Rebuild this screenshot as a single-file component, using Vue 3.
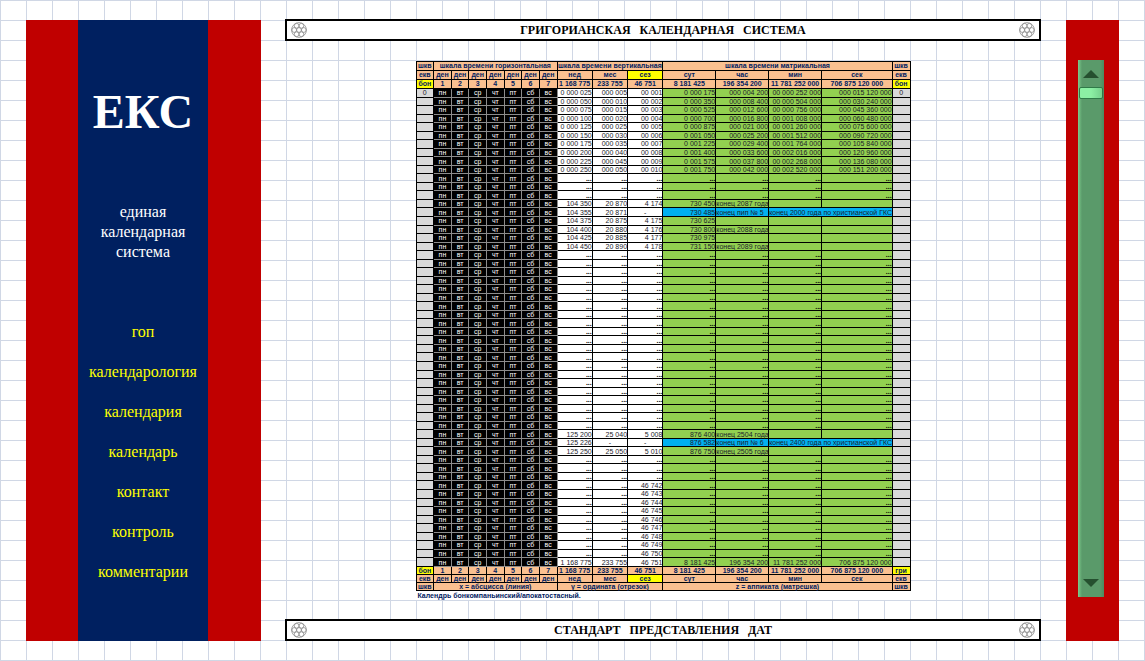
<script setup>
import { ref } from 'vue'

const position = ref(1)

const spaced = (...words) => words.join('\u00a0\u00a0\u00a0')
const title = spaced('ГРИГОРИАНСКАЯ', 'КАЛЕНДАРНАЯ', 'СИСТЕМА')
const standard = spaced('СТАНДАРТ', 'ПРЕДСТАВЛЕНИЯ', 'ДАТ')

const links = ['гоп', 'календарология', 'календария', 'календарь', 'контакт', 'контроль', 'комментарии']
const week = ['пн', 'вт', 'ср', 'чт', 'пт', 'сб', 'вс']
const days = [1, 2, 3, 4, 5, 6, 7]
const totals = ['1 168 775', '233 755', '46 751', '8 181 425', '196 354 200', '11 781 252 000', '706 875 120 000']
const units = ['нед', 'мес', 'сез', 'сут', 'час', 'мин', 'сек']

function pad(value, length) {
  const digits = String(value).padStart(length, '0')
  return digits.replace(/\B(?=(\d{3})+$)/g, ' ')
}

const dots = '...'
const empty = () => Array(7).fill(dots)

const rows = []
for (let i = 1; i <= 10; i++) {
  rows.push([pad(25 * i, 7), pad(5 * i, 6), pad(i, 5), pad(175 * i, 7), pad(4200 * i, 9), pad(252000 * i, 11), pad(15120000 * i, 12)])
}
for (let i = 0; i < 3; i++) rows.push(empty())
rows.push(['104 350', '20 870', '4 174', '730 450', 'конец 2087 года', '', ''])
rows.push(['104 355', '20 871', '-', '730 485', 'конец пип № 5', 'конец 2000 года по христианской ГКС'])
rows.push(['104 375', '20 875', '4 175', '730 625', '', '', ''])
rows.push(['104 400', '20 880', '4 176', '730 800', 'конец 2088 года', '', ''])
rows.push(['104 425', '20 885', '4 177', '730 975', '', '', ''])
rows.push(['104 450', '20 890', '4 178', '731 150', 'конец 2089 года', '', ''])
for (let i = 0; i < 21; i++) rows.push(empty())
rows.push(['125 200', '25 040', '5 008', '876 400', 'конец 2504 года', '', ''])
rows.push(['125 226', '-', '-', '876 582', 'конец пип № 6', 'конец 2400 года по христианской ГКС'])
rows.push(['125 250', '25 050', '5 010', '876 750', 'конец 2505 года', '', ''])
for (let i = 0; i < 3; i++) rows.push(empty())
for (let n = 46742; n <= 46750; n++) rows.push([dots, dots, pad(n, 5), dots, dots, dots, dots])
rows.push(totals)

function cellClass(row, index, text) {
  return {
    plain: index < 3,
    green: index > 2 && row.length === 7,
    blue: index > 2 && row.length === 6,
    note: text.startsWith('конец'),
    dash: text === '-',
    dots: text === dots,
  }
}
</script>

<template>
  <div class="page">
    <aside class="side">
      <div class="side-inner">
        <h1>ЕКС</h1>
        <p>единая<br />календарная<br />система</p>
        <nav>
          <a v-for="link in links" :key="link" href="#">{{ link }}</a>
        </nav>
      </div>
    </aside>

    <main>
      <header class="bar">
        <svg class="rosette" viewBox="0 0 16 16" aria-hidden="true">
          <use href="#rosette" />
        </svg>
        <h2>{{ title }}</h2>
        <svg class="rosette" viewBox="0 0 16 16" aria-hidden="true">
          <use href="#rosette" />
        </svg>
      </header>

      <figure>
        <table>
          <colgroup>
            <col v-for="n in 8" :key="'a' + n" class="w1" />
            <col v-for="n in 3" :key="'b' + n" class="w2" />
            <col v-for="n in 3" :key="'c' + n" class="w3" />
            <col class="w4" />
            <col class="w1" />
          </colgroup>
          <thead>
            <tr>
              <th>шкв</th>
              <th colspan="7">шкала времени горизонтальная</th>
              <th colspan="3">шкала времени вертикальная</th>
              <th colspan="4">шкала времени матрикальная</th>
              <th>шкв</th>
            </tr>
            <tr>
              <th>екв</th>
              <th v-for="d in days" :key="d">ден</th>
              <th v-for="u in units" :key="u" :class="{ yellow: u === 'сез' }">{{ u }}</th>
              <th>екв</th>
            </tr>
            <tr>
              <th class="yellow">бон</th>
              <th v-for="d in days" :key="d">{{ d }}</th>
              <th v-for="t in totals" :key="t">{{ t }}</th>
              <th class="yellow">бон</th>
            </tr>
          </thead>
          <tbody>
            <tr v-for="(row, r) in rows" :key="r">
              <td class="edge">{{ r === 0 ? 0 : '' }}</td>
              <td v-for="day in week" :key="day" class="day">{{ day }}</td>
              <td
                v-for="(text, i) in row"
                :key="i"
                :class="cellClass(row, i, text)"
                :colspan="row.length === 6 && i === 5 ? 2 : 1"
              >{{ text }}</td>
              <td class="edge">{{ r === 0 ? 0 : '' }}</td>
            </tr>
          </tbody>
          <tfoot>
            <tr>
              <th class="yellow">бон</th>
              <th v-for="d in days" :key="d">{{ d }}</th>
              <th v-for="t in totals" :key="t">{{ t }}</th>
              <th class="yellow">гри</th>
            </tr>
            <tr>
              <th>екв</th>
              <th v-for="d in days" :key="d">ден</th>
              <th v-for="u in units" :key="u" :class="{ yellow: u === 'сез' }">{{ u }}</th>
              <th>екв</th>
            </tr>
            <tr>
              <th>шкв</th>
              <th colspan="7">x = абсцисса (линия)</th>
              <th colspan="3">y = ордината (отрезок)</th>
              <th colspan="4">z = аппиката (матрешка)</th>
              <th>шкв</th>
            </tr>
          </tfoot>
        </table>
        <figcaption>Календрь бонкомпаньинский/апокатостасный.</figcaption>
      </figure>

      <footer class="bar">
        <svg class="rosette" viewBox="0 0 16 16" aria-hidden="true">
          <use href="#rosette" />
        </svg>
        <h2>{{ standard }}</h2>
        <svg class="rosette" viewBox="0 0 16 16" aria-hidden="true">
          <use href="#rosette" />
        </svg>
      </footer>
    </main>

    <aside class="rail">
      <div class="scroller">
        <button type="button" aria-label="Вверх" @click="position--">
          <svg viewBox="0 0 16 8"><path d="M8 0 16 8H0Z" /></svg>
        </button>
        <input v-model.number="position" type="range" min="1" max="100" aria-label="Прокрутка" />
        <button type="button" aria-label="Вниз" @click="position++">
          <svg viewBox="0 0 16 8"><path d="M0 0H16L8 8Z" /></svg>
        </button>
      </div>
    </aside>

    <svg class="defs" aria-hidden="true">
      <symbol id="rosette" viewBox="0 0 16 16">
        <g fill="none" stroke="#8c8c8c" stroke-width="0.8">
          <circle cx="8" cy="8" r="7.4" />
          <circle cx="8" cy="8" r="2.4" />
          <circle cx="12.8" cy="8" r="2.4" />
          <circle cx="10.4" cy="12.2" r="2.4" />
          <circle cx="5.6" cy="12.2" r="2.4" />
          <circle cx="3.2" cy="8" r="2.4" />
          <circle cx="5.6" cy="3.8" r="2.4" />
          <circle cx="10.4" cy="3.8" r="2.4" />
        </g>
      </symbol>
    </svg>
  </div>
</template>

<style>
body {
  margin: 0;
}
</style>

<style scoped>
.page {
  box-sizing: border-box;
  min-height: 100vh;
  padding: 19px 26px 20px;
  display: grid;
  grid-template-columns: 235px 1fr 53px;
  gap: 24px;
  background-color: #fff;
  background-image: linear-gradient(to right, #d0d7e5 1px, transparent 1px),
    linear-gradient(to bottom, #d0d7e5 1px, transparent 1px);
  background-size: 26px 20px;
  font-family: "Liberation Serif", "Times New Roman", serif;
}

.side,
.rail {
  margin-top: 1px;
  background: #c00000;
}

.side-inner {
  box-sizing: border-box;
  height: 100%;
  margin: 0 53px 0 52px;
  padding-top: 60px;
  background: #002060;
  color: #fff;
  text-align: center;
  font-size: 16px;
  line-height: 20px;
}

h1 {
  margin: 0 0 58px;
  font-size: 48px;
  line-height: 64px;
}

.side p {
  margin: 0 0 60px;
}

nav {
  display: flex;
  flex-direction: column;
  align-items: center;
  gap: 20px;
}

nav a {
  color: #ff0;
  text-decoration: none;
}

main {
  margin-right: 1px;
  display: flex;
  flex-direction: column;
  align-items: center;
  justify-content: space-between;
}

.bar {
  box-sizing: border-box;
  width: 100%;
  padding: 0 4px;
  display: flex;
  align-items: center;
  justify-content: space-between;
  border: 2px solid #000;
  background: #fff;
}

.bar h2 {
  margin: 0;
  font-size: 12px;
  line-height: 18px;
  white-space: nowrap;
}

.rosette {
  width: 16px;
  height: 16px;
}

.defs {
  position: absolute;
  width: 0;
  height: 0;
}

figure {
  flex: 1;
  width: 495px;
  margin: 20px 0 19px;
  display: grid;
  grid-template-rows: 1fr 9px;
  background: #fff;
  font-family: "Liberation Sans", Arial, sans-serif;
  font-size: 7px;
  line-height: 7px;
}

table {
  width: 100%;
  height: 100%;
  table-layout: fixed;
  border-collapse: collapse;
}

.w1 {
  width: 10px;
}

.w2 {
  width: 20px;
}

.w3 {
  width: 30px;
}

.w4 {
  width: 40px;
}

th,
td {
  padding: 0;
  border: 1px solid #000;
  color: #1c1c2c;
  text-align: right;
  white-space: nowrap;
}

th {
  background: #fac090;
  color: #002060;
  text-align: center;
}

thead th {
  line-height: 8px;
}

.yellow {
  background: #ff0;
}

.edge {
  background: #d9d9d9;
  text-align: center;
}

.day {
  border-color: #8c8c8c;
  background: #000;
  color: #fff;
  text-align: center;
}

.plain {
  background: #fff;
}

.green {
  background: #92d050;
}

.blue {
  background: #00b0f0;
}

.note {
  text-align: left;
}

.dash {
  text-align: center;
}

.dots {
  color: #000;
  font-weight: bold;
}

figcaption {
  padding-left: 2px;
  color: #002060;
  font-weight: bold;
  line-height: 9px;
}

.scroller {
  box-sizing: border-box;
  height: calc(100% - 84px);
  margin: 40px 15px 44px 12px;
  padding: 10px 0;
  display: flex;
  flex-direction: column;
  align-items: center;
  gap: 9px;
  background: linear-gradient(to right, #7ccb8c, #5a9a6a 4px, #5a9a6a 22px, #4d8a5f);
}

.scroller button {
  width: 16px;
  height: 8px;
  padding: 0;
  border: 0;
  background: none;
}

.scroller svg {
  display: block;
  width: 16px;
  height: 8px;
  fill: #25502f;
}

.scroller input {
  flex: 1;
  width: 26px;
  min-height: 0;
  margin: 0;
  writing-mode: vertical-lr;
  appearance: none;
  background: none;
}

.scroller input::-webkit-slider-thumb {
  appearance: none;
  box-sizing: border-box;
  width: 24px;
  height: 12px;
  border: 1px solid #2f7a48;
  border-radius: 2px;
  background: linear-gradient(to right, #8cf0a4, #8cf0a4 50%, #74d08c);
}
</style>
